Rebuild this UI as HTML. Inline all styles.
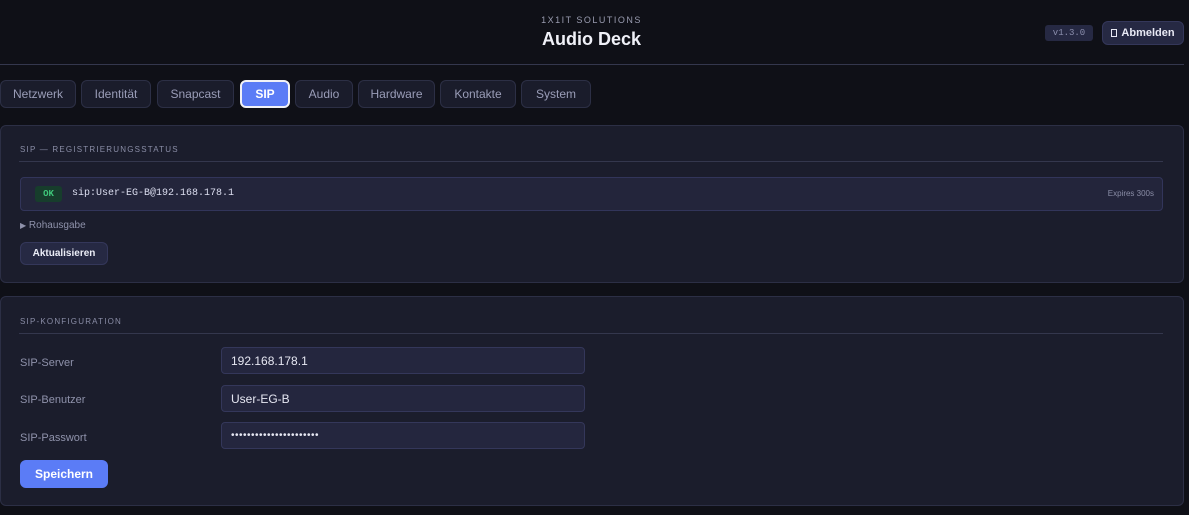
<!DOCTYPE html>
<html><head><meta charset="utf-8"><style>
*{box-sizing:border-box;margin:0;padding:0}
body{width:1189px;height:515px;background:#0f1017;font-family:"Liberation Sans",sans-serif;color:#c9cbe0;position:relative;overflow:hidden}
.a{position:absolute}
.tab{position:absolute;top:80px;height:28px;border:1px solid #2c2f45;background:#1a1c2b;border-radius:6px;font-size:12px;color:#9a9db8;display:flex;align-items:center;justify-content:center}
.panel{position:absolute;left:0;width:1184px;background:#1b1d2c;border:1px solid #2c2f45;border-radius:6px}
.h{position:absolute;left:20px;font-size:8px;letter-spacing:1.2px;color:#8a8da6}
.hr{position:absolute;left:19px;width:1144px;height:1px;background:#34374d}
.lbl{position:absolute;left:20px;font-size:11px;color:#8f92ab}
.inp{position:absolute;left:221px;width:364px;height:27px;background:#24263e;border:1px solid #34375a;border-radius:4px;font-size:12px;color:#e6e7f2;padding-left:9px;display:flex;align-items:center}
</style></head><body>
<div class="a" style="left:0;width:1183px;top:15px;text-align:center;font-size:9px;letter-spacing:1.5px;color:#9a9cb0">1X1IT SOLUTIONS</div>
<div class="a" style="left:0;width:1183px;top:29px;text-align:center;font-size:18px;font-weight:bold;color:#f0f1f8">Audio Deck</div>
<div class="a" style="left:1045px;top:25px;width:48px;height:16px;background:#262943;border-radius:3px;font-family:'Liberation Mono',monospace;font-size:9px;color:#8c8fae;display:flex;align-items:center;justify-content:center">v1.3.0</div>
<div class="a" style="left:1102px;top:21px;width:82px;height:24px;background:#262943;border:1px solid #34375a;border-radius:6px;font-size:11px;font-weight:bold;color:#e8e9f4;display:flex;align-items:center;justify-content:center"><span style="display:inline-block;width:6px;height:8px;border:1px solid #e8e9f4;margin-right:4px"></span>Abmelden</div>
<div class="a" style="left:0;top:64px;width:1184px;height:1px;background:#34374d"></div>
<div class="tab" style="left:0;width:76px">Netzwerk</div>
<div class="tab" style="left:81px;width:70px">Identität</div>
<div class="tab" style="left:157px;width:77px">Snapcast</div>
<div class="tab" style="left:240px;width:50px;background:#5b7cf6;border:2px solid #f2f2f6;color:#fff;font-weight:bold">SIP</div>
<div class="tab" style="left:295px;width:58px">Audio</div>
<div class="tab" style="left:358px;width:77px">Hardware</div>
<div class="tab" style="left:440px;width:76px">Kontakte</div>
<div class="tab" style="left:521px;width:70px">System</div>

<div class="panel" style="top:125px;height:158px"></div>
<div class="h" style="top:145px">SIP — REGISTRIERUNGSSTATUS</div>
<div class="hr" style="top:161px"></div>
<div class="a" style="left:20px;top:177px;width:1143px;height:34px;background:#23253b;border:1px solid #32355a;border-radius:4px"></div>
<div class="a" style="left:35px;top:186px;width:27px;height:16px;background:#173d2c;border-radius:3px;color:#3fc77a;font-family:'Liberation Mono',monospace;font-size:9px;font-weight:bold;display:flex;align-items:center;justify-content:center">OK</div>
<div class="a" style="left:72px;top:188px;font-family:'Liberation Mono',monospace;font-size:10px;line-height:12px;color:#dcdef0">sip:User-EG-B@192.168.178.1</div>
<div class="a" style="left:1060px;top:189px;width:94px;text-align:right;font-size:8px;line-height:10px;color:#8a8da6">Expires 300s</div>
<div class="a" style="left:20px;top:220px;font-size:10px;color:#8f92ab"><span style="font-size:8px">▶</span> Rohausgabe</div>
<div class="a" style="left:20px;top:242px;width:88px;height:23px;background:#262943;border:1px solid #34375a;border-radius:6px;font-size:10px;font-weight:bold;color:#eceef8;display:flex;align-items:center;justify-content:center">Aktualisieren</div>

<div class="panel" style="top:296px;height:210px"></div>
<div class="h" style="top:317px">SIP-KONFIGURATION</div>
<div class="hr" style="top:333px"></div>
<div class="lbl" style="top:357px">SIP-Server</div>
<div class="inp" style="top:347px">192.168.178.1</div>
<div class="lbl" style="top:394px">SIP-Benutzer</div>
<div class="inp" style="top:385px">User-EG-B</div>
<div class="lbl" style="top:432px">SIP-Passwort</div>
<div class="inp" style="top:422px;font-size:10px;letter-spacing:0.5px">••••••••••••••••••••••</div>
<div class="a" style="left:20px;top:460px;width:88px;height:28px;background:#5b7cf6;border-radius:6px;font-size:12px;font-weight:bold;color:#fff;display:flex;align-items:center;justify-content:center">Speichern</div>
</body></html>
